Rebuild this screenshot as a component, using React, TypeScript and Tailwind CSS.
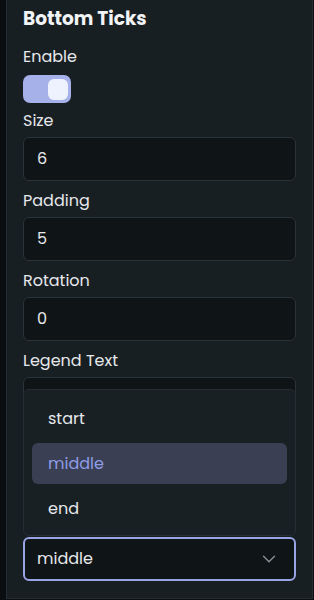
import { ChevronDown } from "lucide-react";

const fields = [
  { label: "Size", value: "6" },
  { label: "Padding", value: "5" },
  { label: "Rotation", value: "0" },
  { label: "Legend Text", value: "" },
  { label: "", value: "0" },
];

const options = ["start", "middle", "end"];

const Field = ({ label, value }: { label: string; value: string }) => (
  <div className="mt-[8px] flex flex-col">
    <div className="mb-[4px] h-6 text-[16px] leading-6 text-[#e6e8eb]">{label}</div>
    <div className="flex h-[44px] items-center rounded-md border border-[#2a3337] bg-[#0f1417] px-[13px] text-[16px] text-[#e6e8eb]">
      {value}
    </div>
  </div>
);

export default function App() {
  return (
    <div
      className="h-[600px] w-[314px] bg-[#0b0e11]"
      style={{ fontFamily: "Poppins, 'Open Sans', sans-serif" }}
    >
      <div className="ml-[6px] flex h-[599px] w-[307px] flex-col border-x border-b border-[#262e33] bg-[#181f23] px-4 pt-[7px]">
        <div className="text-[18.5px] font-bold leading-6 text-[#f1f3f5]">Bottom Ticks</div>
        <div className="mt-[14px] text-[16px] leading-6 text-[#e6e8eb]">Enable</div>
        <div className="mt-[6px] flex h-[28px] w-[48px] items-center justify-end rounded-[7px] bg-[#a5b1e8] pr-[3px]">
          <div className="h-[21px] w-[20px] rounded-[6px] bg-[#eef2ff]" />
        </div>

        <div className="mt-[-2px] flex flex-col">
          {fields.map((f, i) => (
            <Field key={i} label={f.label} value={f.value} />
          ))}

          <div className="relative mt-[8px] flex flex-col">
            <div className="mb-[4px] h-6" />
            <div className="absolute bottom-[45px] left-0 right-0 z-10 flex flex-col gap-[4px] rounded-md border border-[#262e33] bg-[#182024] px-2 pb-[6px] pt-2">
              {options.map((o) => (
                <div
                  key={o}
                  className={
                    o === "middle"
                      ? "flex h-[41px] items-center rounded-md bg-[#3a3f53] pl-4 text-[16px] text-[#8f9ce6]"
                      : "flex h-[41px] items-center rounded-md pl-4 text-[16px] text-[#e6e8eb]"
                  }
                >
                  {o}
                </div>
              ))}
            </div>
            <div className="flex h-[44px] items-center justify-between rounded-md border-2 border-[#98a4e3] bg-[#0f1417] pl-[12px] pr-[14px] text-[16px] text-[#e6e8eb]">
              <span>middle</span>
              <ChevronDown size={22} strokeWidth={1.5} className="text-[#8a9096]" />
            </div>
          </div>
        </div>
      </div>
    </div>
  );
}
